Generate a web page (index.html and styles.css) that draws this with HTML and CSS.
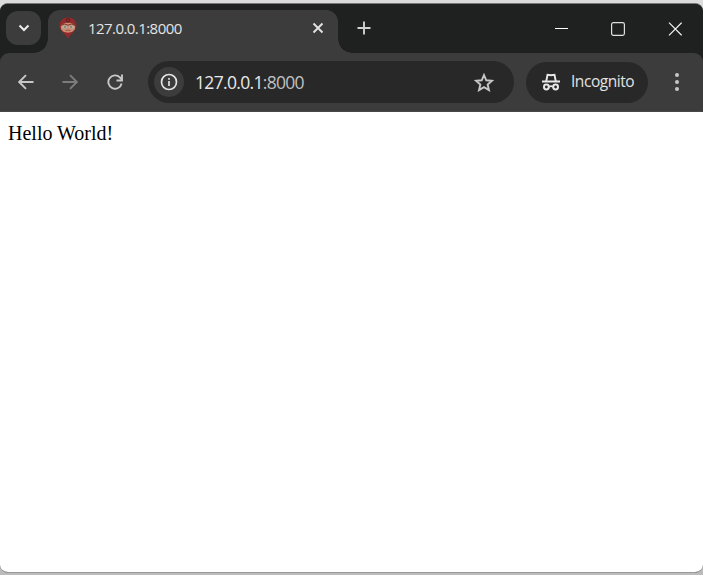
FILE: index.html
```html
<!DOCTYPE html>
<html lang="en">
<head>
<meta charset="utf-8">
<title>127.0.0.1:8000</title>
<link rel="stylesheet" href="styles.css">
</head>
<body>
<div class="window">
  <header class="tabstrip">
    <button class="tab-search" aria-label="Search tabs">
      <svg width="12" height="8" viewBox="0 0 12 8"><path d="M1.500 1.500 6 6l4.500-4.500" fill="none" stroke="#ececec" stroke-width="2"/></svg>
    </button>
    <div class="tab">
      <svg class="favicon" width="18" height="22" viewBox="0 0 18 22">
        <path d="M9 .5C4 .5 .6 4 .5 8.500c0 4 2.500 6 5.500 8.500h6c3-2.500 5.500-4.500 5.500-8.500C17.400 4 14 .5 9 .5z" fill="#92292a"/>
        <path d="M1.800 10.500c0-2.700 3-4.700 7.200-4.700s7.200 2 7.200 4.700c-.4 3.200-3 5.200-7.200 5.200s-6.800-2-7.200-5.200z" fill="#c98d73"/>
        <path d="M2 8.300 5.500 7l3.500 1.200L12.500 7 16 8.300" fill="none" stroke="#7c3a30" stroke-width="1"/>
        <ellipse cx="5.600" cy="10" rx="2.700" ry="1.600" fill="#b5b0a6"/>
        <ellipse cx="12.400" cy="10" rx="2.700" ry="1.600" fill="#b5b0a6"/>
        <circle cx="6" cy="10" r=".8" fill="#605049"/><circle cx="12" cy="10" r=".8" fill="#605049"/>
        <path d="M6.500 13.500q2.500-.8 5 0" fill="none" stroke="#94463c" stroke-width=".8"/>
        <path d="M3.500 14.800q5.500 2.500 11 0L11.500 18 9 21.500 6.500 18z" fill="#92292a"/>
        <circle cx="9" cy="3.300" r="1.700" fill="none" stroke="#5f1c20"/>
      </svg>
      <span class="tab-title">127.0.0.1:8000</span>
      <svg class="tab-close" width="12" height="12" viewBox="0 0 12 12"><path d="m1.500 1.500 9 9m0-9-9 9" stroke="#e3e3e3" stroke-width="1.900"/></svg>
    </div>
    <svg class="new-tab" width="14" height="14" viewBox="0 0 14 14"><path d="M7 .5v13M.5 7h13" stroke="#d0d2d1" stroke-width="1.900"/></svg>
    <div class="controls">
      <svg width="14" height="14" viewBox="0 0 14 14"><path d="M1 6.500h13" stroke="#fff"/></svg>
      <svg width="14" height="14" viewBox="0 0 14 14"><rect x=".6" y=".6" width="12.800" height="12.800" rx="1.800" fill="none" stroke="#e0e0e0" stroke-width="1.200"/></svg>
      <svg width="14" height="14" viewBox="0 0 14 14"><path d="m1 .7 12.600 12.600m0-12.600L1 13.300" stroke="#f0f0f0" stroke-width="1.200"/></svg>
    </div>
  </header>
  <nav class="toolbar">
    <svg width="16" height="16" viewBox="0 0 16 16"><path d="M15.500 8H1.500M8 1.200 1.200 8 8 14.800" fill="none" stroke="#c7c7c7" stroke-width="1.900"/></svg>
    <svg class="forward" width="16" height="16" viewBox="0 0 16 16"><path d="M.5 8h14M8 1.200 14.800 8 8 14.800" fill="none" stroke="#7c7c7c" stroke-width="1.900"/></svg>
    <svg class="reload" width="16" height="16" viewBox="0 0 16 16"><path d="M14.600 9.500A6.700 6.700 0 1 1 12.900 3.400L14.500 5.300" fill="none" stroke="#c7c7c7" stroke-width="1.900"/><path d="M15 .5v6H9.500" fill="none" stroke="#c7c7c7" stroke-width="1.900"/></svg>
    <div class="address">
      <span class="site-info"><svg width="18" height="18" viewBox="0 0 18 18"><circle cx="9" cy="9" r="7.500" fill="none" stroke="#e3e3e3" stroke-width="1.700"/><path d="M9 8v5M9 4.900v1.800" stroke="#e3e3e3" stroke-width="1.700"/></svg></span>
      <span class="url">127.0.0.1<span class="port">:8000</span></span>
      <svg class="star" width="20" height="19" viewBox="0 0 20 19"><path d="m10 2 2.250 5.250 5.700.5-4.300 3.750 1.300 5.600L10 14.100l-4.950 3 1.300-5.600-4.300-3.750 5.700-.5z" fill="none" stroke="#c7c7c7" stroke-width="1.900"/></svg>
    </div>
    <div class="incognito">
      <svg width="18" height="18" viewBox="0 0 18 18" fill="none" stroke="#e8e8e8"><path d="M0 8.500h18" stroke-width="2"/><path d="M4.200 8.500 5.500 1.700l3.500.5 3.500-.5 1.300 6.800" stroke-width="1.900"/><circle cx="4.400" cy="14" r="2.400" stroke-width="2"/><circle cx="13.600" cy="14" r="2.400" stroke-width="2"/><path d="M6.900 13.700q2.100-1 4.200 0" stroke-width="1.700"/></svg>
      <span class="label">Incognito</span>
    </div>
    <svg class="menu" width="4" height="18" viewBox="0 0 4 18" fill="#c7c7c7"><circle cx="2" cy="2" r="2"/><circle cx="2" cy="9" r="2"/><circle cx="2" cy="16" r="2"/></svg>
  </nav>
  <main class="page">Hello World!</main>
</div>
</body>
</html>
```
FILE: styles.css
```css
* { box-sizing: border-box; }
body {
  margin: 0;
  height: 575px;
  padding: 3px 0 2px;
  overflow: hidden;
  background: linear-gradient(#dcdcdc 0 50%, #bcbcbc 50%);
  font-family: "Open Sans", sans-serif;
}
svg { display: block; flex: none; }
.window {
  display: flex;
  flex-direction: column;
  height: 570px;
  overflow: hidden;
  border-top: 1px solid #777978;
  border-bottom: 1px solid #999;
  border-radius: 8px;
  background: #1f2120;
}
.tabstrip {
  display: flex;
  height: 49px;
  flex: none;
  background: #1f2120;
}
.tab-search {
  display: flex;
  align-items: center;
  justify-content: center;
  width: 35px;
  height: 34px;
  margin: 7px 7px 0 6px;
  padding: 0;
  border: 0;
  border-radius: 12px;
  background: #3c3c3c;
}
.tab {
  position: relative;
  display: flex;
  align-items: center;
  width: 290px;
  height: 43px;
  margin-top: 6px;
  padding: 0 14px 7px 11px;
  border-radius: 12px 12px 0 0;
  background: #3c3c3c;
}
.tab::before, .tab::after {
  content: "";
  position: absolute;
  bottom: 0;
  width: 14px;
  height: 14px;
}
.tab::before {
  right: 100%;
  background: radial-gradient(circle at 0 0, transparent 13.500px, #3c3c3c 14px);
}
.tab::after {
  left: 100%;
  background: radial-gradient(circle at 100% 0, transparent 13.500px, #3c3c3c 14px);
}
.tab-title {
  margin-left: 11px;
  color: #e3e3e3;
  font-size: 15px;
  line-height: 20px;
  letter-spacing: -0.560px;
}
.tab-close { margin-left: auto; }
.new-tab { margin: 17px 0 0 19px; }
.controls {
  display: flex;
  gap: 43px;
  margin: 18px 21px 0 auto;
}
.toolbar {
  display: flex;
  align-items: center;
  flex: none;
  height: 59px;
  padding-left: 18px;
  border-bottom: 1px solid #484848;
  border-radius: 9px 9px 0 0;
  background: #3c3c3c;
}
.forward { margin-left: 28px; }
.reload { margin-left: 29px; }
.address {
  display: flex;
  align-items: center;
  width: 366px;
  height: 42px;
  margin-left: 25px;
  padding: 0 20px 0 6px;
  border-radius: 21px;
  background: #282828;
}
.site-info {
  display: flex;
  align-items: center;
  justify-content: center;
  width: 30px;
  height: 30px;
  border-radius: 50%;
  background: #3c3c3c;
}
.url {
  margin-left: 11px;
  color: #e8e8e8;
  font-size: 17.500px;
  letter-spacing: -0.680px;
}
.port { color: #c0c0c0; }
.star { margin-left: auto; }
.incognito {
  display: flex;
  align-items: center;
  width: 122px;
  height: 41px;
  margin-left: 12px;
  padding-left: 16px;
  border-radius: 21px;
  background: #282828;
}
.label {
  margin-left: 11px;
  padding-bottom: 2px;
  color: #e3e3e3;
  font-size: 15.500px;
  letter-spacing: -0.460px;
}
.menu { margin-left: 27px; }
.page {
  flex: 1;
  padding: 9px 8px;
  background: #fff;
  color: #000;
  font: 20px/24px "Liberation Serif", serif;
}
```
